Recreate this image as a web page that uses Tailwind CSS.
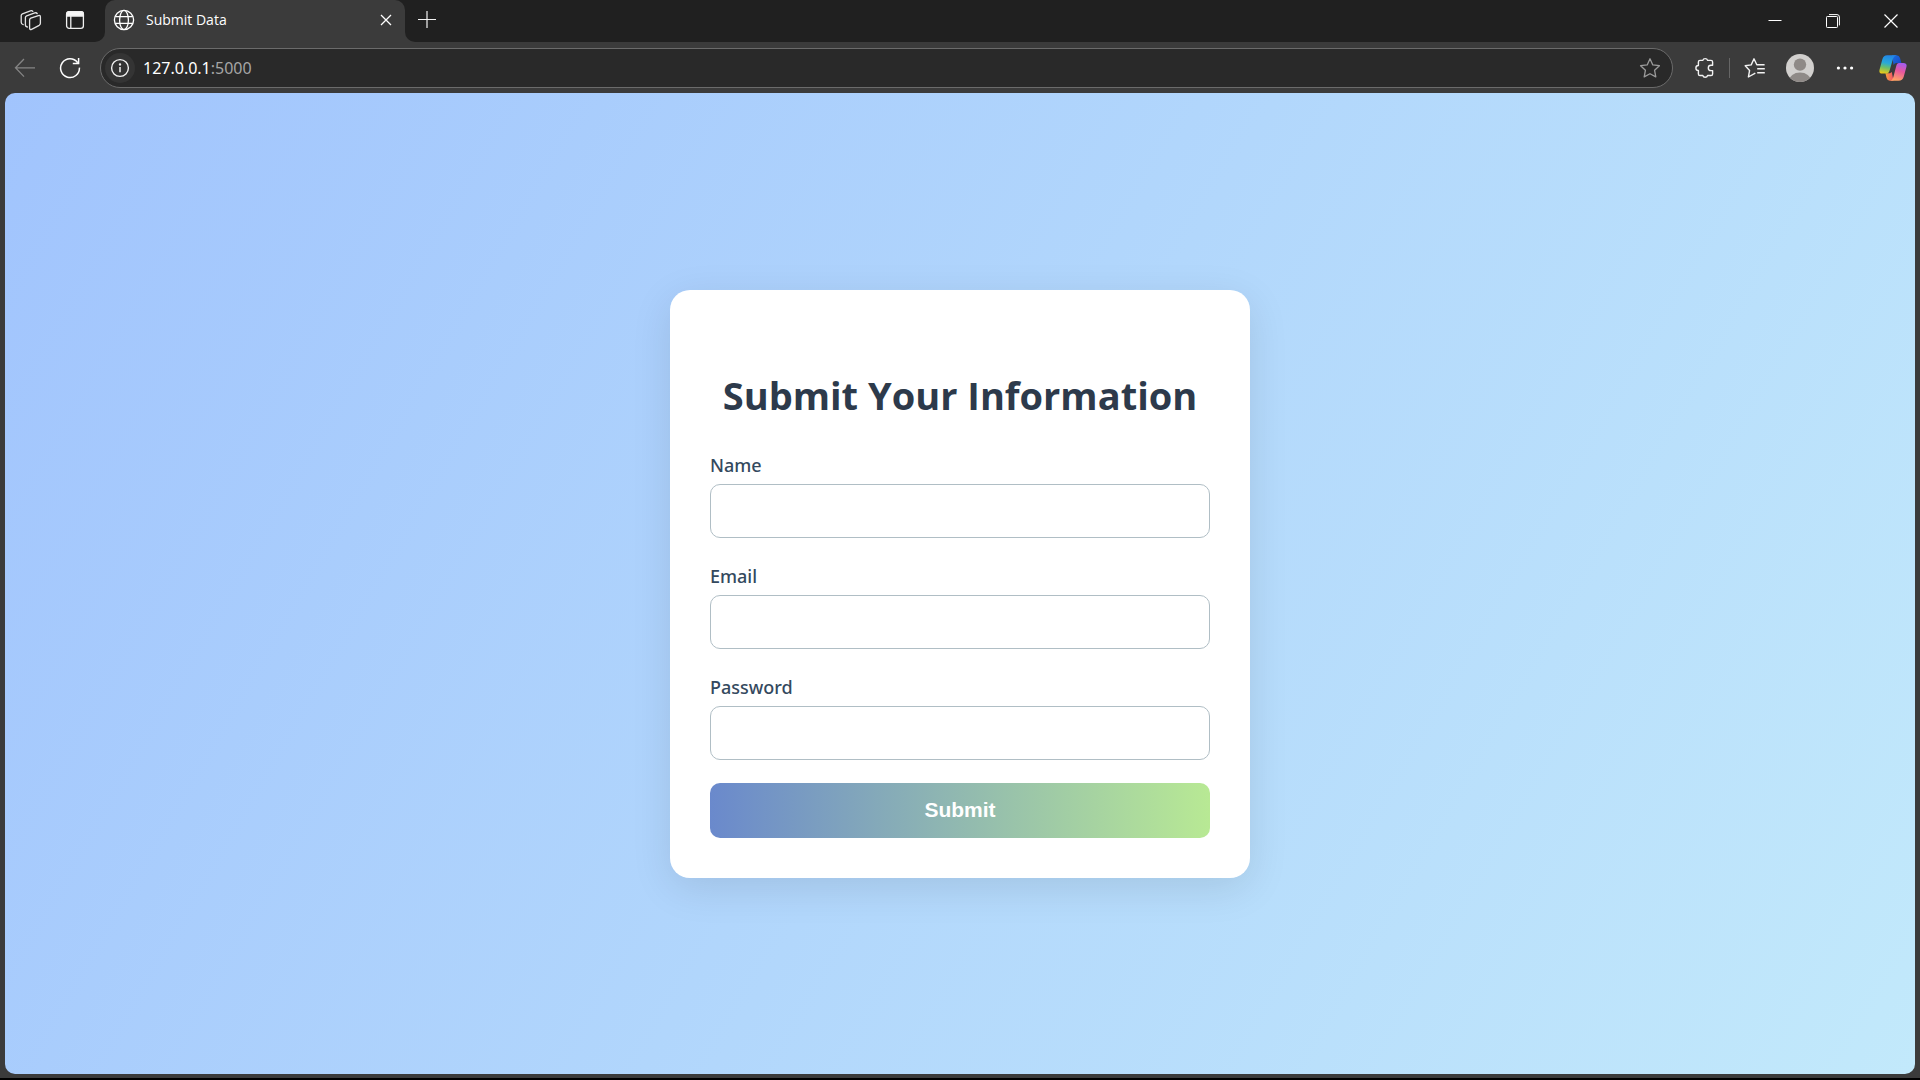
<!DOCTYPE html>
<html lang="en">
<head>
<meta charset="utf-8">
<meta name="viewport" content="width=device-width, initial-scale=1">
<title>Submit Data</title>
<script src="https://cdn.jsdelivr.net/npm/@tailwindcss/browser@4"></script>
</head>
<body class="flex h-screen flex-col overflow-hidden border-b-2 border-black bg-[#3b3b3b] font-['Noto_Sans',sans-serif] text-white">

  <!-- Tab strip -->
  <header class="flex h-[42px] shrink-0 bg-[#3b3b3b]">
    <div class="flex w-[105px] items-center rounded-br-[10px] bg-[#202020] pb-0.5 pl-5">
      <button type="button" aria-label="Workspaces" class="size-[22px]">
        <svg viewBox="0 0 22 22" class="size-[22px]" fill="none" stroke="#e4e4e4" stroke-width="1.3" stroke-linejoin="round" stroke-linecap="round">
          <path d="M10.800 9.200 18.400 6.600Q20.400 6 20.400 8V14.300Q20.400 15.600 19.200 16.300L11.600 20.300Q9.600 21 9.600 19.200V10.900Q9.600 9.700 10.800 9.200Z"/>
          <path d="M7.400 18Q5.400 17.800 5.400 15.800V8.600Q5.400 7.400 6.600 6.900L14.800 3.900Q16.600 3.400 17.200 4.600"/>
          <path d="M3.200 15.600Q1.200 15.200 1.200 13.200V6.600Q1.200 5.400 2.400 4.900L10.400 1.800Q12 1.300 12.800 2.400"/>
        </svg>
      </button>
      <button type="button" aria-label="Tab actions" class="ml-[23px] size-5">
        <svg viewBox="0 0 20 20" class="size-5" fill="none" stroke="#f0f0f0" stroke-width="1.3">
          <rect x="1.6" y="1.6" width="16.8" height="16.8" rx="2.6"/>
          <path d="M5.8 6v12.4"/>
          <path d="M1.6 6V4.2Q1.6 1.6 4.2 1.6H15.8Q18.4 1.6 18.4 4.2V6Z" fill="#f6f6f6"/>
        </svg>
      </button>
    </div>
    <div class="bg-[#202020]">
      <div class="flex h-full w-[300px] items-center rounded-t-[10px] bg-[#3b3b3b] pr-[9px] pb-0.5 pl-2">
        <svg viewBox="0 0 22 22" class="size-[22px]" fill="none" stroke="#fff" stroke-width="1.3">
          <circle cx="11" cy="11" r="9.6"/><ellipse cx="11" cy="11" rx="4.4" ry="9.6"/>
          <path d="M2.2 7.6h17.6M2.2 14.4h17.6"/>
        </svg>
        <span class="ml-[11px] flex-1 font-['Open_Sans',sans-serif] text-sm">Submit Data</span>
        <button type="button" aria-label="Close tab" class="grid size-5 place-items-center">
          <svg viewBox="0 0 12 12" class="size-3" fill="none" stroke="#fff" stroke-width="1.3"><path d="m1 1 10 10M11 1 1 11"/></svg>
        </button>
      </div>
    </div>
    <div class="flex flex-1 items-center justify-between rounded-bl-[10px] bg-[#202020] pl-3">
      <button type="button" aria-label="New tab" class="pb-1">
        <svg viewBox="0 0 20 20" class="size-5" fill="none" stroke="#f4f4f4" stroke-width="1.2"><path d="M1 10.5h18M10 2v17"/></svg>
      </button>
      <div class="flex h-full">
        <button type="button" aria-label="Minimize" class="grid w-[58px] place-items-center">
          <svg viewBox="0 0 14 14" class="size-3.5" stroke="#fff"><path d="M.5 6.5h13"/></svg>
        </button>
        <button type="button" aria-label="Restore" class="grid w-[58px] place-items-center">
          <svg viewBox="0 0 14 14" class="size-3.5" fill="none" stroke="#fff"><rect x=".5" y="2.500" width="11" height="11" rx=".8"/><path d="M3 .6h8Q13.400.6 13.400 3v8.400"/></svg>
        </button>
        <button type="button" aria-label="Close window" class="grid w-[58px] place-items-center">
          <svg viewBox="0 0 14 14" class="size-3.5" stroke="#fff" stroke-width="1.2"><path d="m.5.5 13 13M13.5.5l-13 13"/></svg>
        </button>
      </div>
    </div>
  </header>

  <!-- Toolbar -->
  <nav class="flex h-[51px] shrink-0 items-center pl-3.5">
    <button type="button" aria-label="Back">
      <svg viewBox="0 0 22 22" class="size-[22px]" fill="none" stroke="#858585" stroke-width="1.3"><path d="M10 2 1.5 10.8 10 19.6M1.5 10.8H21"/></svg>
    </button>
    <button type="button" aria-label="Refresh" class="ml-[23px]">
      <svg viewBox="0 0 22 22" class="size-[22px]" fill="none" stroke="#fff" stroke-width="1.5"><path d="M18.6 5.6A9.4 9.4 0 1 0 20.4 10.6M19.6 1v5.6h-5.8"/></svg>
    </button>
    <div class="ml-[19px] flex h-10 flex-1 items-center rounded-full border border-[#6b6b6b] bg-[#292929] pr-[11px] pl-1">
      <button type="button" aria-label="View site information" class="grid size-[30px] place-items-center rounded-full bg-[#343434]">
        <svg viewBox="0 0 20 20" class="size-5" fill="none" stroke="#f2f2f2" stroke-width="1.4"><circle cx="10" cy="10" r="8.4"/><path d="M10 9v5.2" stroke-width="1.5"/><circle cx="10" cy="6.4" r=".5"/></svg>
      </button>
      <div class="ml-2 flex-1 text-base leading-6">127.0.0.1<span class="text-[#a5a5a5]">:5000</span></div>
      <button type="button" aria-label="Add to favorites">
        <svg viewBox="0 0 22 22" class="size-[22px]" fill="none" stroke="#9b9b9b" stroke-width="1.3" stroke-linejoin="round"><path d="m11 1.8 2.8 6.1 6.6.8-4.8 4.6 1.2 6.6L11 16.7l-5.8 3.2 1.2-6.6-4.8-4.6 6.6-.8Z"/></svg>
      </button>
    </div>
    <button type="button" aria-label="Extensions" class="ml-[21px]">
      <svg viewBox="0 0 22 22" class="size-[22px]" fill="none" stroke="#f2f2f2" stroke-width="1.4" stroke-linejoin="round"><path d="M8.800 3.400A2.500 2.500 0 0 1 13.600 3.400H17Q18.600 3.400 18.600 5V8.200H17A2.700 2.700 0 0 0 17 13.600H18.600V16.900Q18.600 18.500 17 18.500H13.600A2.500 2.500 0 0 1 8.800 18.500H6Q4.400 18.500 4.400 16.900V13.500A2.500 2.500 0 0 1 4.400 8.500V5Q4.400 3.400 6 3.400Z"/></svg>
    </button>
    <div class="ml-[13px] h-5 w-px bg-[#666]"></div>
    <button type="button" aria-label="Favorites" class="ml-3.5">
      <svg viewBox="0 0 22 22" class="size-[22px]" fill="none" stroke="#f2f2f2" stroke-width="1.4" stroke-linejoin="round"><path d="M11.3 16.2 4.4 20l1.2-6.6L1.2 8.8l6-.9L10 1.8l2.8 6H20.6M13.2 11.8h7.6M13.2 15.8h7.6"/></svg>
    </button>
    <button type="button" aria-label="Profile" class="ml-5">
      <svg viewBox="0 0 28 28" class="size-7"><defs><clipPath id="face"><circle cx="14" cy="14" r="14"/></clipPath></defs><g clip-path="url(#face)"><path fill="#d2d0ce" d="M0 0h28v28H0z"/><circle cx="14" cy="10.6" r="6.2" fill="#8f8a87"/><ellipse cx="14" cy="27" rx="11" ry="8.4" fill="#8f8a87"/></g></svg>
    </button>
    <button type="button" aria-label="Settings and more" class="ml-[21px]">
      <svg viewBox="0 0 20 20" class="size-5" fill="#fff"><circle cx="3.4" cy="10" r="1.6"/><circle cx="10" cy="10" r="1.6"/><circle cx="16.6" cy="10" r="1.6"/></svg>
    </button>
    <button type="button" aria-label="Copilot" class="mr-[13px] ml-6">
      <svg viewBox="0 0 28 28" class="size-7">
        <defs>
          <linearGradient id="c1" x1=".4" y1="0" x2=".2" y2="1"><stop offset="0" stop-color="#2387e6"/><stop offset=".4" stop-color="#28a9d8"/><stop offset=".65" stop-color="#6bbf6a"/><stop offset="1" stop-color="#f4cc12"/></linearGradient>
          <linearGradient id="c2" x1=".7" y1="0" x2=".4" y2="1"><stop offset="0" stop-color="#a35cf0"/><stop offset=".45" stop-color="#e8579d"/><stop offset="1" stop-color="#ffa564"/></linearGradient>
          <linearGradient id="c3" x1="0" y1="0" x2="1" y2="1"><stop offset="0" stop-color="#1c6fe0"/><stop offset="1" stop-color="#1747c4"/></linearGradient>
          <linearGradient id="c4" x1="0" y1="0" x2="1" y2="0"><stop offset="0" stop-color="#f9a13a"/><stop offset="1" stop-color="#f0506c"/></linearGradient>
        </defs>
        <path fill="url(#c3)" d="M13 1.300h4.600Q20.200 1.300 21 4l1.400 5H17.600Q15.400 9 14.600 11Z"/>
        <path fill="url(#c4)" d="M6.400 19.300H11L12.800 18 14.500 26.700H10.800Q8.400 26.700 7.600 24Z"/>
        <path fill="url(#c1)" d="M8.200 1.300H17.500Q15 1.800 14 4.800L10.600 16.400Q9.600 19.600 6.800 19.600H3.200Q-.4 19.600.6 15.600L3.300 5.500Q4.500 1.300 8.200 1.300Z"/>
        <path fill="url(#c2)" d="M20 9H24.400Q28.400 9 27.400 13L24.800 22.400Q23.500 26.700 19.600 26.700H11Q13.400 26.200 14.200 23.400L17.200 12.200Q18 9 20 9Z"/>
      </svg>
    </button>
  </nav>

  <!-- Page -->
  <main class="mx-[5px] mb-1 flex flex-1 items-center justify-center rounded-[10px] bg-[linear-gradient(120deg,#a1c4fd,#c2e9fb)]">
    <form class="flex w-full max-w-[580px] flex-col rounded-[20px] bg-white px-10 pt-20 pb-10 shadow-[0_10px_40px_rgba(0,0,0,0.1)]">
      <h1 class="mb-[33px] text-center font-['Open_Sans',sans-serif] text-[38px] leading-[50px] font-bold text-[#2d3a4b]">Submit Your Information</h1>
      <div class="flex flex-col font-medium text-[#34495e]">
        <div class="mb-[26px] flex flex-col gap-[7px]">
          <label for="name" class="text-lg leading-6">Name</label>
          <input id="name" name="name" type="text" class="h-[54px] rounded-[10px] border border-[#b0bec5] bg-white px-4 text-lg">
        </div>
        <div class="mb-[26px] flex flex-col gap-[7px]">
          <label for="email" class="text-lg leading-6">Email</label>
          <input id="email" name="email" type="email" class="h-[54px] rounded-[10px] border border-[#b0bec5] bg-white px-4 text-lg">
        </div>
        <div class="flex flex-col gap-[7px]">
          <label for="password" class="text-lg leading-6">Password</label>
          <input id="password" name="password" type="password" class="h-[54px] rounded-[10px] border border-[#b0bec5] bg-white px-4 text-lg">
        </div>
        <button type="submit" class="mt-[23px] h-[55px] rounded-[10px] bg-[linear-gradient(90deg,#6a89cc,#b8e994)] font-['Liberation_Sans',sans-serif] text-[21px] font-bold text-white">Submit</button>
      </div>
    </form>
  </main>
</body>
</html>
